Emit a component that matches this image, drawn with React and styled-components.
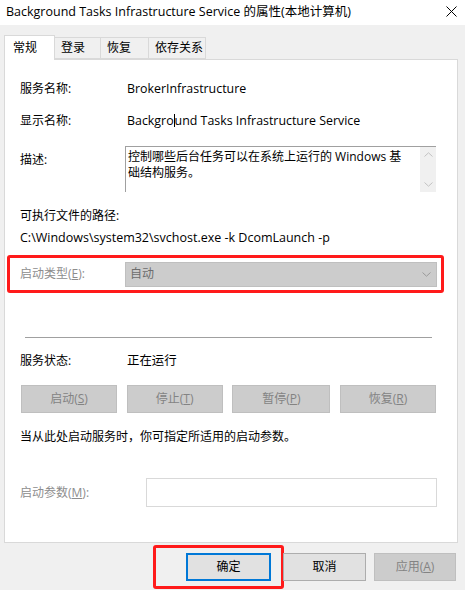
import React from "react";
import styled, { createGlobalStyle } from "styled-components";

const GlobalStyle = createGlobalStyle`
  html, body {
    margin: 0;
    padding: 0;
    background: #f0f0f0;
  }
  body {
    font-family: "Open Sans", "Noto Sans CJK SC", sans-serif;
    font-size: 12px;
    line-height: 16px;
    color: #000;
  }
`;

// window frame
const Window = styled.div`
  width: 465px;
  height: 590px;
  background: #f0f0f0;
  display: flex;
  flex-direction: column;
  overflow: hidden;
`;

const TitleBar = styled.div`
  height: 25px;
  background: #fff;
  display: flex;
  align-items: center;
  justify-content: space-between;
  padding: 0 8px 0 6px;
`;

const TitleText = styled.span`
  white-space: nowrap;
  font-size: 12.5px;
  margin-top: -2px;
`;

const CloseBtn = styled.svg`
  width: 11px;
  height: 11px;
  margin-top: -2px;
`;

// tabs
const TabStrip = styled.div`
  display: flex;
  align-items: flex-end;
  padding-left: 4px;
  margin-top: 10px;
  height: 24px;
`;

const Tab = styled.div`
  box-sizing: border-box;
  height: ${(p) => (p.$active ? "25px" : "22px")};
  width: ${(p) => p.$w}px;
  padding-left: ${(p) => (p.$active ? "8px" : "6px")};
  display: flex;
  align-items: center;
  background: ${(p) => (p.$active ? "#fff" : "#f0f0f0")};
  border: 1px solid #d9d9d9;
  border-bottom: ${(p) => (p.$active ? "none" : "1px solid #d9d9d9")};
  margin-left: ${(p) => (p.$first ? "0" : "-1px")};
  margin-bottom: ${(p) => (p.$active ? "-1px" : "0")};
  position: relative;
  z-index: ${(p) => (p.$active ? 2 : 1)};
`;

const Panel = styled.div`
  box-sizing: border-box;
  margin: 0 7px 0 4px;
  height: 484px;
  background: #fff;
  border: 1px solid #d9d9d9;
  padding: 21px 20px 0 15px;
  display: flex;
  flex-direction: column;
`;

const Row = styled.div`
  display: flex;
  align-items: ${(p) => p.$align || "center"};
  min-height: 16px;
  margin-top: ${(p) => p.$mt || 0}px;
`;

const Label = styled.div`
  width: ${(p) => p.$w || 107}px;
  flex-shrink: 0;
  color: ${(p) => (p.$disabled ? "#8d8d8d" : "#000")};
  padding-top: ${(p) => p.$pt || 0}px;
  white-space: nowrap;
`;

const Value = styled.div`
  white-space: nowrap;
  font-size: 12.4px;
`;

const Caret = styled.span`
  display: inline-block;
  width: 1px;
  height: 13px;
  background: #000;
  vertical-align: -2px;
`;

const DescBox = styled.div`
  margin-left: -2px;
  width: 311px;
  height: 46px;
  box-sizing: border-box;
  border-top: 1px solid #a0a0a0;
  border-left: 1px solid #a0a0a0;
  display: flex;
`;

const DescText = styled.div`
  flex: 1;
  padding: 2px 0 0 2px;
`;

const ScrollBar = styled.div`
  width: 16px;
  background: #f0f0f0;
  display: flex;
  flex-direction: column;
  justify-content: space-between;
  align-items: center;
  padding: 5px 0;
`;

const Path = styled.div`
  margin-top: 6px;
  white-space: nowrap;
  font-size: 12.5px;
`;

const Highlight = styled.div`
  margin: 9px -7px 0 -13px;
  height: 38px;
  box-sizing: border-box;
  border: 3px solid #ff1a1a;
  border-radius: 3px;
  display: flex;
  align-items: center;
  padding-left: 10px;
`;

const Combo = styled.div`
  box-sizing: border-box;
  width: 312px;
  height: 25px;
  margin-left: -2px;
  background: #cccccc;
  border: 1px solid #bfbfbf;
  display: flex;
  align-items: center;
  justify-content: space-between;
  padding: 0 5px 0 4px;
  color: #6d6d6d;
`;

const Separator = styled.div`
  height: 1px;
  background: #a0a0a0;
  margin: 44px 5px 0 5px;
`;

const ButtonRow = styled.div`
  display: flex;
  justify-content: space-between;
  margin: 16px 1px 0 1px;
`;

const Button = styled.div`
  box-sizing: border-box;
  width: ${(p) => p.$w}px;
  height: 28px;
  display: flex;
  align-items: center;
  justify-content: center;
  background: ${(p) => (p.$disabled ? "#cccccc" : "#e1e1e1")};
  border: ${(p) =>
    p.$default ? "2px solid #0078d7" : p.$disabled ? "1px solid #bfbfbf" : "1px solid #adadad"};
  color: ${(p) => (p.$disabled ? "#838383" : "#000")};
  white-space: nowrap;
`;

const Hint = styled.div`
  margin-top: 16px;
  white-space: nowrap;
`;

const ParamInput = styled.div`
  box-sizing: border-box;
  width: 291px;
  height: 29px;
  border: 1px solid #d9d9d9;
  background: #fff;
`;

const Footer = styled.div`
  display: flex;
  align-items: center;
  justify-content: flex-end;
  padding-right: 9px;
  height: 47px;
`;

const OkWrap = styled.div`
  box-sizing: border-box;
  border: 3px solid #ff1a1a;
  border-radius: 3px;
  height: 44px;
  width: 131px;
  display: flex;
  align-items: center;
  justify-content: flex-end;
  padding-right: 10px;
  margin-right: -1px;
  margin-top: 1px;
`;

const FooterGroup = styled.div`
  display: flex;
  gap: 8px;
  align-items: center;
`;

const Chevron = ({ up, color = "#c2c2c2" }) => (
  <svg width="9" height="5" viewBox="0 0 9 5">
    <path
      d={up ? "M0.5 4.5 L4.5 0.8 L8.5 4.5" : "M0.5 0.5 L4.5 4.2 L8.5 0.5"}
      fill="none"
      stroke={color}
      strokeWidth="1"
    />
  </svg>
);

const tabs = [
  { name: "常规", w: 51 },
  { name: "登录", w: 47 },
  { name: "恢复", w: 49 },
  { name: "依存关系", w: 58 },
];

const actions = [
  { label: "启动", key: "S", w: 96 },
  { label: "停止", key: "T", w: 96 },
  { label: "暂停", key: "P", w: 98 },
  { label: "恢复", key: "R", w: 96 },
];

export default function App() {
  return (
    <Window>
      <GlobalStyle />
      <TitleBar>
        <TitleText>Background Tasks Infrastructure Service 的属性(本地计算机)</TitleText>
        <CloseBtn viewBox="0 0 11 11">
          <path d="M0.5 0.5 L10.5 10.5 M10.5 0.5 L0.5 10.5" stroke="#000" strokeWidth="1" />
        </CloseBtn>
      </TitleBar>

      <TabStrip>
        {tabs.map((t, i) => (
          <Tab key={t.name} $w={t.w} $active={i === 0} $first={i === 0}>
            {t.name}
          </Tab>
        ))}
      </TabStrip>

      <Panel>
        <Row>
          <Label>服务名称:</Label>
          <Value>BrokerInfrastructure</Value>
        </Row>
        <Row $mt={16}>
          <Label>显示名称:</Label>
          <Value>
            Backgro<Caret />und Tasks Infrastructure Service
          </Value>
        </Row>
        <Row $mt={17} $align="flex-start">
          <Label $pt={6}>描述:</Label>
          <DescBox>
            <DescText>
              控制哪些后台任务可以在系统上运行的 Windows 基<br />
              础结构服务。
            </DescText>
            <ScrollBar>
              <Chevron up />
              <Chevron />
            </ScrollBar>
          </DescBox>
        </Row>
        <Row $mt={16}>
          <Label $w={200}>可执行文件的路径:</Label>
        </Row>
        <Path>C:\Windows\system32\svchost.exe -k DcomLaunch -p</Path>

        <Highlight>
          <Label $disabled>
            启动类型(<u>E</u>):
          </Label>
          <Combo>
            <span>自动</span>
            <Chevron color="#9a9a9a" />
          </Combo>
        </Highlight>

        <Separator />

        <Row $mt={15}>
          <Label>服务状态:</Label>
          <Value>正在运行</Value>
        </Row>

        <ButtonRow>
          {actions.map((a) => (
            <Button key={a.key} $w={a.w} $disabled>
              {a.label}(<u>{a.key}</u>)
            </Button>
          ))}
        </ButtonRow>

        <Hint>当从此处启动服务时，你可指定所适用的启动参数。</Hint>

        <Row $mt={33}>
          <Label $w={126} $disabled>
            启动参数(<u>M</u>):
          </Label>
          <ParamInput />
        </Row>
      </Panel>

      <Footer>
        <OkWrap>
          <Button $w={85} $default>
            确定
          </Button>
        </OkWrap>
        <FooterGroup>
          <Button $w={83}>取消</Button>
          <Button $w={82} $disabled>
            应用(<u>A</u>)
          </Button>
        </FooterGroup>
      </Footer>
    </Window>
  );
}
